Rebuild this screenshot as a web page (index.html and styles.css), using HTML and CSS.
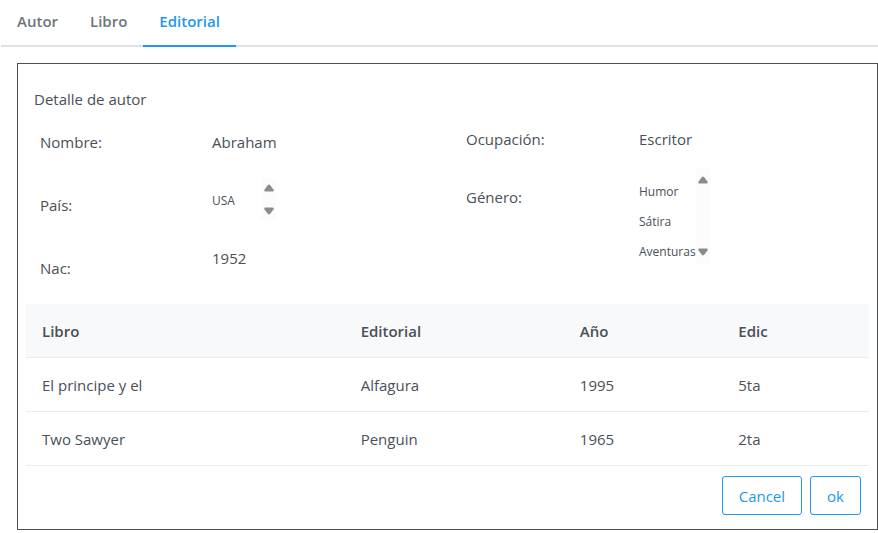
FILE: index.html
```html
<!DOCTYPE html>
<html lang="es">
<head>
<meta charset="utf-8">
<meta name="viewport" content="width=device-width, initial-scale=1">
<title>Editorial</title>
<link rel="stylesheet" href="styles.css">
</head>
<body>
<div class="tabs" role="tablist">
  <button class="tab" type="button" role="tab" aria-selected="false">Autor</button>
  <button class="tab" type="button" role="tab" aria-selected="false">Libro</button>
  <button class="tab tab-active" type="button" role="tab" aria-selected="true">Editorial</button>
</div>
<main class="panel">
  <section class="card">
    <h1 class="title">Detalle de autor</h1>
    <div class="details">
      <dl class="fields fields-left">
        <dt>Nombre:</dt>
        <dd>Abraham</dd>
        <dt>País:</dt>
        <dd>
          <div class="listbox listbox-single">
            <ul class="options"><li>USA</li></ul>
            <div class="scroller">
              <button class="arrow" type="button" aria-label="Subir"><svg viewBox="0 0 10 8"><path d="M3.800 1.200Q5 0 6.200 1.200L9.500 5.500Q10.300 7.500 8.500 7.500H1.500Q-.3 7.500 .5 5.500Z"/></svg></button>
              <button class="arrow arrow-down" type="button" aria-label="Bajar"><svg viewBox="0 0 10 8"><path d="M3.800 1.200Q5 0 6.200 1.200L9.500 5.500Q10.300 7.500 8.500 7.500H1.500Q-.3 7.500 .5 5.500Z"/></svg></button>
            </div>
          </div>
        </dd>
        <dt>Nac:</dt>
        <dd class="value-top">1952</dd>
      </dl>
      <dl class="fields fields-right">
        <dt>Ocupación:</dt>
        <dd>Escritor</dd>
        <dt>Género:</dt>
        <dd>
          <div class="listbox listbox-multi">
            <ul class="options"><li>Humor</li><li>Sátira</li><li>Aventuras</li></ul>
            <div class="scroller">
              <button class="arrow" type="button" aria-label="Subir"><svg viewBox="0 0 10 8"><path d="M3.800 1.200Q5 0 6.200 1.200L9.500 5.500Q10.300 7.500 8.500 7.500H1.500Q-.3 7.500 .5 5.500Z"/></svg></button>
              <button class="arrow arrow-down" type="button" aria-label="Bajar"><svg viewBox="0 0 10 8"><path d="M3.800 1.200Q5 0 6.200 1.200L9.500 5.500Q10.300 7.500 8.500 7.500H1.500Q-.3 7.500 .5 5.500Z"/></svg></button>
            </div>
          </div>
        </dd>
      </dl>
    </div>
    <table class="books">
      <thead>
        <tr><th class="col-book">Libro</th><th class="col-publisher">Editorial</th><th class="col-year">Año</th><th>Edic</th></tr>
      </thead>
      <tbody>
        <tr><td>El principe y el</td><td>Alfagura</td><td>1995</td><td>5ta</td></tr>
        <tr><td>Two Sawyer</td><td>Penguin</td><td>1965</td><td>2ta</td></tr>
      </tbody>
    </table>
    <div class="actions">
      <button class="btn" type="button">Cancel</button>
      <button class="btn" type="button">ok</button>
    </div>
  </section>
</main>
</body>
</html>
```
FILE: styles.css
```css
* { box-sizing: border-box; }

body {
  margin: 0 0 0 1px;
  background: #fff;
  color: #495057;
  font: 15px/22px "Open Sans", "Noto Sans", sans-serif;
}

button { font: inherit; cursor: pointer; }

.tabs {
  display: flex;
  border-bottom: 2px solid #dee2e6;
}

.tab {
  margin-bottom: -2px;
  padding: 10px 16px 13px;
  border: 0;
  border-bottom: 2px solid transparent;
  background: none;
  color: #6c757d;
  font-weight: 600;
}

.tab-active {
  border-color: #2196f3;
  color: #2196f3;
}

.panel { padding: 16px 0 0 16px; }

.card {
  padding: 24px 8px 14px;
  border: 1px solid #495057;
}

.title {
  margin: 0;
  padding-left: 8px;
  font-size: 15px;
  font-weight: 400;
}

.details {
  display: grid;
  grid-template-columns: 426fr 403fr;
  padding: 0 0 4px 14px;
}

.fields {
  display: grid;
  align-content: start;
  align-items: center;
  margin: 0;
}

.fields dd { margin: 0; }

.fields-left {
  grid-template-columns: 172fr 254fr;
  grid-template-rows: 64px 62px 64px;
}

.fields-left .value-top {
  align-self: start;
  padding-top: 11px;
}

.fields-right {
  grid-template-columns: 173fr 230fr;
  grid-template-rows: 58px auto;
  align-items: start;
}

.fields-right dt,
.fields-right dd { padding-top: 18px; }

.fields-right dd:last-child { padding-top: 0; }

.listbox {
  display: inline-flex;
  font-size: 12px;
  line-height: 30px;
  vertical-align: top;
}

.options {
  margin: 0;
  padding: 8px 0 5px;
  list-style: none;
}

.listbox-single {
  width: 64px;
  justify-content: space-between;
  margin-bottom: 12px;
}

.listbox-multi .options { padding: 9px 0 0; }

.scroller {
  display: flex;
  flex-direction: column;
  justify-content: space-between;
  width: 15px;
  padding: 6px 0;
  background: #fcfcfc;
}

.listbox-multi .scroller {
  margin-bottom: 3px;
  padding: 8px 0;
}

.arrow {
  display: flex;
  justify-content: center;
  padding: 0;
  border: 0;
  background: none;
}

.arrow svg {
  width: 10px;
  height: 8px;
  fill: #8b8b8b;
}

.arrow-down svg { transform: rotate(180deg); }

.books {
  width: 100%;
  border-collapse: separate;
  border-spacing: 0;
  table-layout: fixed;
}

.books th,
.books td {
  padding: 16px 16px 15px;
  border-bottom: 1px solid #e9ecef;
  text-align: left;
}

.books th {
  background: #f8f9fb;
  font-weight: 600;
}

.col-book { width: 37.8%; }
.col-publisher { width: 26%; }
.col-year { width: 18.8%; }

.actions {
  display: flex;
  justify-content: flex-end;
  gap: 8px;
  padding: 10px 8px 0 0;
}

.btn {
  padding: 8px 16px 7px;
  border: 1px solid #2196f3;
  border-radius: 3px;
  background: #fff;
  color: #2196f3;
}
```
